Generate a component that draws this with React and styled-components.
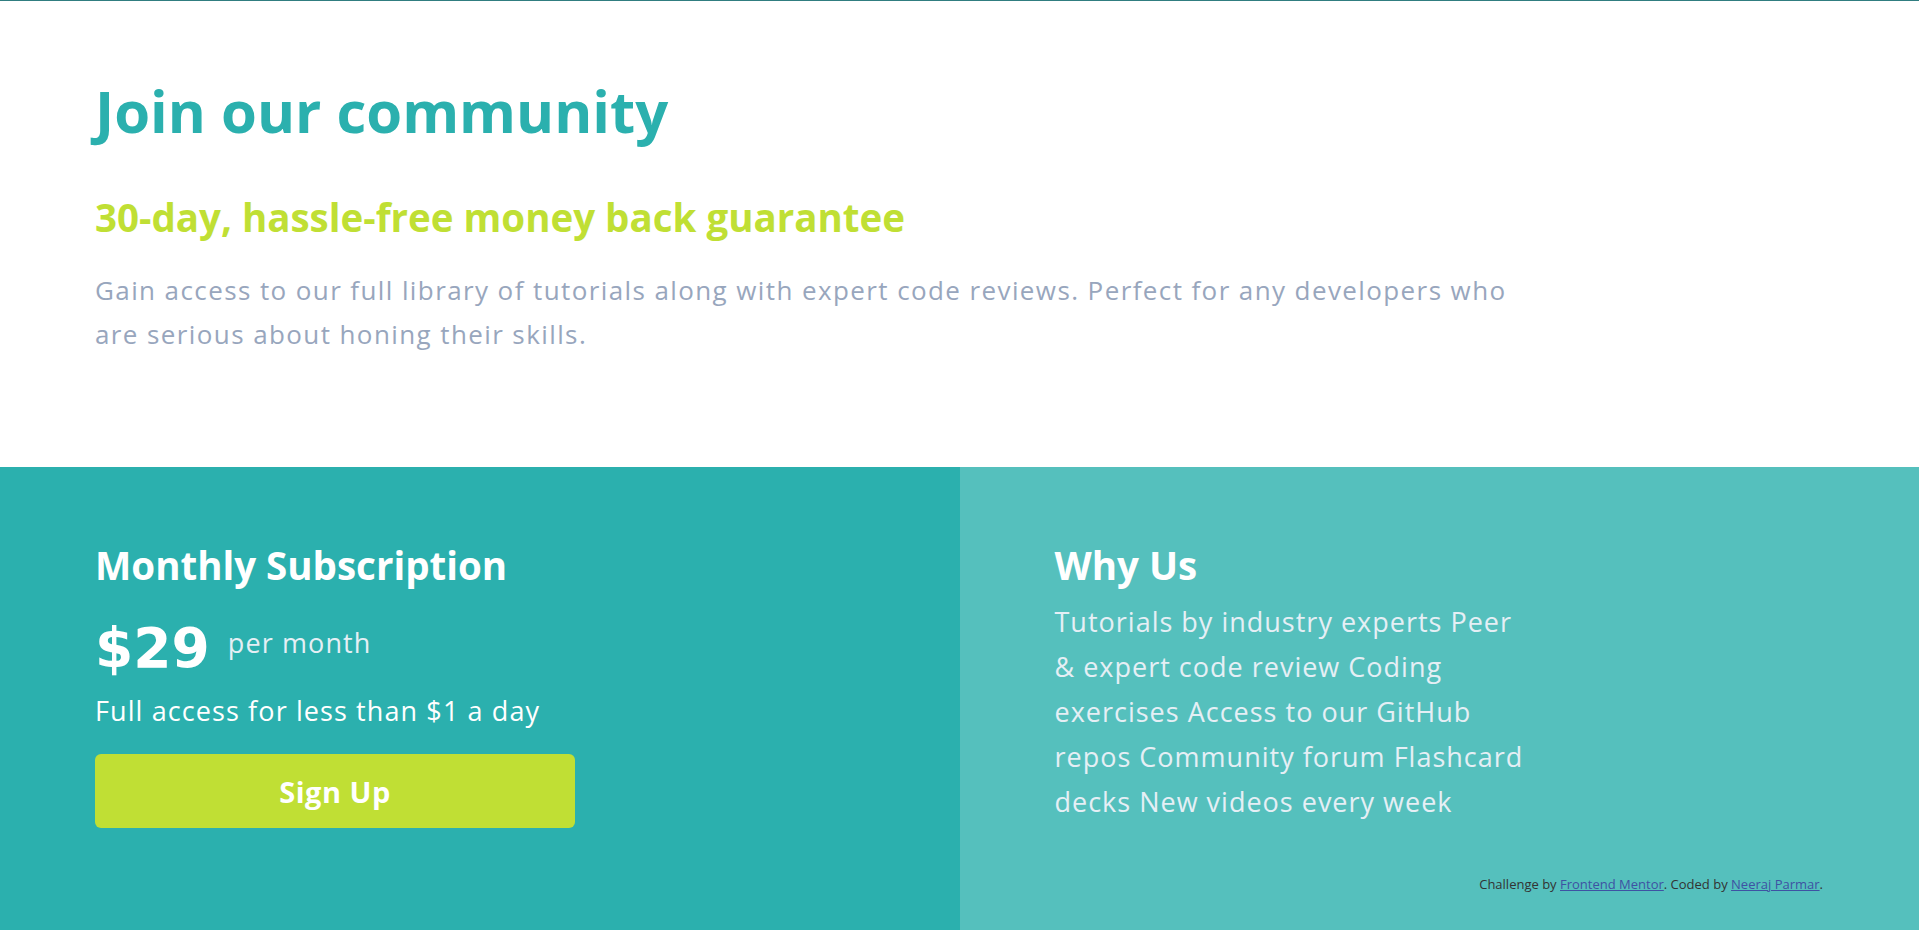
import React from "react";
import styled, { createGlobalStyle } from "styled-components";

const GlobalStyle = createGlobalStyle`
  *, *::before, *::after { box-sizing: border-box; }
  html, body { margin: 0; padding: 0; }
  body {
    font-family: "Open Sans", "Liberation Sans", sans-serif;
    background: #ffffff;
  }
`;

const Page = styled.div`
  min-height: 100vh;
  display: flex;
  flex-direction: column;
  border-top: 1px solid #307d80;
  background: #ffffff;
`;

const Intro = styled.section`
  padding: 75px 95px 111px;
  display: flex;
  flex-direction: column;
  align-items: flex-start;
`;

const Title = styled.h1`
  margin: 0;
  font-size: 58px;
  line-height: 70px;
  font-weight: 700;
  color: #2bb0ae;
`;

const Guarantee = styled.h2`
  margin: 48px 0 0;
  font-size: 38.5px;
  line-height: 46px;
  font-weight: 700;
  color: #c0df34;
`;

const Lead = styled.p`
  margin: 28px 0 0;
  max-width: 1440px;
  font-size: 26px;
  line-height: 44px;
  letter-spacing: 1.4px;
  font-weight: 400;
  color: #98a6bd;
`;

const Plans = styled.section`
  flex: 1;
  display: grid;
  grid-template-columns: 1fr 1fr;
`;

const Panel = styled.div`
  background: ${(p) => (p.$tone === "light" ? "#55c0bd" : "#2bb0ae")};
  padding: 75px 96px 30px 95px;
  display: flex;
  flex-direction: column;
  align-items: flex-start;
  color: #ffffff;
`;

const PanelTitle = styled.h3`
  margin: 0;
  font-size: 38.5px;
  line-height: 46px;
  font-weight: 700;
  color: #ffffff;
`;

const PriceRow = styled.div`
  margin-top: 28px;
  display: flex;
  align-items: center;
  gap: 18px;
`;

const Price = styled.span`
  font-family: "DejaVu Sans", "Open Sans", sans-serif;
  font-size: 55px;
  line-height: 64px;
  font-weight: 700;
  color: #ffffff;
`;

const Per = styled.span`
  font-size: 27px;
  line-height: 36px;
  letter-spacing: 1.1px;
  margin-bottom: 11px;
  color: #e5eff5;
`;

const Note = styled.p`
  margin: 13px 0 0;
  font-size: 27px;
  line-height: 36px;
  letter-spacing: 1.1px;
  color: #ffffff;
`;

const SignUp = styled.button`
  margin-top: 25px;
  width: 480px;
  height: 74px;
  border: 0;
  border-radius: 6px;
  background: #c0df34;
  color: #ffffff;
  font-family: inherit;
  font-size: 29px;
  letter-spacing: 0.5px;
  font-weight: 700;
  display: flex;
  align-items: center;
  justify-content: center;
  cursor: pointer;
`;

const Reasons = styled.ul`
  margin: 11px 0 0;
  padding: 0;
  list-style: none;
  width: 480px;
  font-size: 27px;
  line-height: 45px;
  letter-spacing: 1px;
  color: #e5eff5;
`;

const Reason = styled.li`
  display: inline;
  &:not(:last-child)::after { content: " "; }
`;

const Attribution = styled.p`
  margin: 50px 0 0;
  align-self: stretch;
  text-align: right;
  font-size: 13px;
  line-height: 20px;
  color: #333333;

  a { color: #3e52a3; }
`;

const reasons = [
  "Tutorials by industry experts",
  "Peer & expert code review",
  "Coding exercises",
  "Access to our GitHub repos",
  "Community forum",
  "Flashcard decks",
  "New videos every week",
];

export default function App() {
  return (
    <>
      <GlobalStyle />
      <Page>
        <Intro>
          <Title>Join our community</Title>
          <Guarantee>30-day, hassle-free money back guarantee</Guarantee>
          <Lead>
            Gain access to our full library of tutorials along with expert code
            reviews. Perfect for any developers who are serious about honing
            their skills.
          </Lead>
        </Intro>
        <Plans>
          <Panel>
            <PanelTitle>Monthly Subscription</PanelTitle>
            <PriceRow>
              <Price>$29</Price>
              <Per>per month</Per>
            </PriceRow>
            <Note>Full access for less than $1 a day</Note>
            <SignUp>Sign Up</SignUp>
          </Panel>
          <Panel $tone="light">
            <PanelTitle>Why Us</PanelTitle>
            <Reasons>
              {reasons.map((r) => (
                <Reason key={r}>{r}</Reason>
              ))}
            </Reasons>
            <Attribution>
              Challenge by <a href="#">Frontend Mentor</a>. Coded by{" "}
              <a href="#">Neeraj Parmar</a>.
            </Attribution>
          </Panel>
        </Plans>
      </Page>
    </>
  );
}
